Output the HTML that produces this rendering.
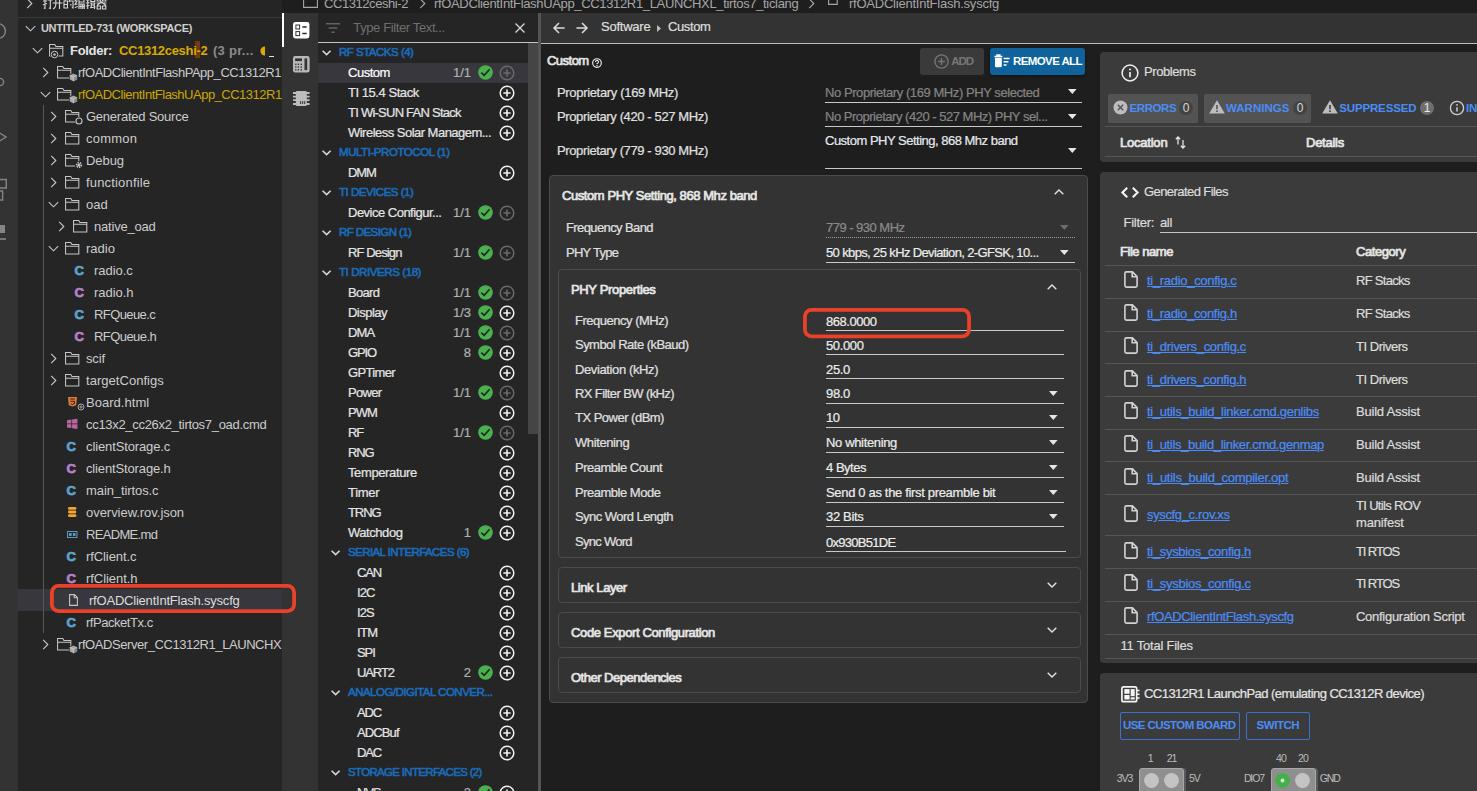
<!DOCTYPE html><html><head><meta charset="utf-8"><title>SysConfig</title><style>
*{box-sizing:border-box;margin:0;padding:0}
html,body{width:1477px;height:791px;overflow:hidden;background:#1e1e1e}
body{font-family:"Liberation Sans",sans-serif;font-size:13px;color:#ccc;position:relative}
.a{position:absolute}
.t{position:absolute;white-space:pre;line-height:16px;height:16px}
.b{font-weight:700}
svg{position:absolute;overflow:visible}
.sb{font-size:13px;letter-spacing:-0.2px;color:#ccc}
.r{font-size:13px;letter-spacing:-0.36px;color:#e0e0e0;-webkit-text-stroke:0.22px}
.rb{font-size:13px;font-weight:400;letter-spacing:-0.3px;color:#e6e6e6;-webkit-text-stroke:0.7px #e6e6e6}
.hd{font-size:11.5px;font-weight:400;letter-spacing:-0.5px;color:#1a6cba;-webkit-text-stroke:0.6px #1a6cba}
.card{position:absolute;background:#333;border:1px solid #4b4b4b;border-radius:4px}
.rc{position:absolute;background:#3b3b3b;border-radius:4px}
.lk{text-decoration:underline}
</style></head><body>
<div class="a" style="left:0px;top:0px;width:1477px;height:13px;background:#1e1e1e;"></div>
<div class="a" style="left:0px;top:0px;width:18px;height:791px;background:#333333;"></div>
<div class="a" style="left:18px;top:0px;width:264px;height:791px;background:#252526;"></div>
<div class="a" style="left:18px;top:17px;width:264px;height:1px;background:#3a3a3a;"></div>
<svg style="left:26px;top:-2.5px" width="7" height="11" viewBox="0 0 7 11"><path d="M1.2 0.8 L5.8 5.5 L1.2 10.2" fill="none" stroke="#c5c5c5" stroke-width="1.15"/></svg>
<svg style="left:41.5px;top:-3.5px" width="11" height="13" viewBox="0 0 11 13"><path d="M1 4 H5 M3 1 V11.5 L1.8 11 M0.8 8 L5 6.5 M5.5 3 H10.5 M8.3 3 V11.5 L6.8 11" stroke="#d4d4d4" stroke-width="1.15" fill="none"/></svg>
<svg style="left:52.3px;top:-3.5px" width="11" height="13" viewBox="0 0 11 13"><path d="M1.5 2.5 H9.5 M0.5 6 H10.5 M3.8 2.5 V8 Q3.5 11 1 12 M7.5 2.5 V12" stroke="#d4d4d4" stroke-width="1.15" fill="none"/></svg>
<svg style="left:63.1px;top:-3.5px" width="11" height="13" viewBox="0 0 11 13"><path d="M1 4 H4.5 V11 H1 Z M1 7.5 H4.5 M2.5 1.5 L2 4 M7 1.5 L6 5 M6.5 4 H10 V11 L8.8 10.5 M7.5 7 L8.3 8.5" stroke="#d4d4d4" stroke-width="1.15" fill="none"/></svg>
<svg style="left:73.9px;top:-3.5px" width="11" height="13" viewBox="0 0 11 13"><path d="M2.5 1 L1 4 L3 4 L1 7.5 L3.5 7 M0.8 10.5 L3.8 9.5 M5 2.5 H10 V5 H5 Z M5 5 V12 M5 7 H10.3 V12 M5 9.5 H10 M7 7 V12 M8.7 7 V12" stroke="#d4d4d4" stroke-width="1.15" fill="none"/></svg>
<svg style="left:84.7px;top:-3.5px" width="11" height="13" viewBox="0 0 11 13"><path d="M0.8 3 H4.5 M2.7 1 V12 M0.8 6 L4.5 5.6 M0.8 9 L4.6 8.5 M5.8 1.5 H9.8 V4.5 H5.8 Z M5.2 6 H10.5 M6.3 6 V11 M9.4 6 V12 M6.3 8 H9.4 M5 10.8 L10.5 10" stroke="#d4d4d4" stroke-width="1.15" fill="none"/></svg>
<svg style="left:95.5px;top:-3.5px" width="11" height="13" viewBox="0 0 11 13"><path d="M1.2 1.2 H4.5 V4 H1.2 Z M6.5 1.2 H9.8 V4 H6.5 Z M0.5 6 H10.5 M5.5 4.5 L1 8.5 M5.5 5 L10 8.5 M1.2 9 H4.5 V12 H1.2 Z M6.5 9 H9.8 V12 H6.5 Z" stroke="#d4d4d4" stroke-width="1.15" fill="none"/></svg>
<svg style="left:24.5px;top:25.0px" width="11" height="7" viewBox="0 0 11 7"><path d="M0.8 1.2 L5.5 5.8 L10.2 1.2" fill="none" stroke="#c5c5c5" stroke-width="1.15"/></svg>
<div class="t b" style="left:41px;top:20px;font-size:11px;color:#cfcfcf;letter-spacing:-0.32px">UNTITLED-731 (WORKSPACE)</div>
<svg style="left:31.5px;top:47.0px" width="11" height="7" viewBox="0 0 11 7"><path d="M0.8 1.2 L5.5 5.8 L10.2 1.2" fill="none" stroke="#c5c5c5" stroke-width="1.15"/></svg>
<svg style="left:49px;top:44.0px" width="14.4" height="12.6" viewBox="0 0 15 13" preserveAspectRatio="none"><path d="M0.6 0.6 H6 L7.2 2.6 H14.4 V12.4 H0.6 Z M0.6 4.4 H14.4" fill="none" stroke="#c5c5c5" stroke-width="1.1"/></svg>
<svg style="left:49.6px;top:50.3px" width="9" height="9" viewBox="0 0 9 9"><circle cx="4.5" cy="4.5" r="4.5" fill="#252526"/><circle cx="4.5" cy="4.5" r="3.3" fill="none" stroke="#c5c5c5" stroke-width="1"/><circle cx="4.5" cy="4.5" r="1.2" fill="#c5c5c5"/></svg>
<div class="t b" style="left:70px;top:43px;font-size:13px;letter-spacing:-0.3px;color:#e4e4e4">Folder:</div>
<div class="a" style="left:195px;top:41px;width:5px;height:17px;background:#74390f;"></div>
<div class="t b" style="left:119px;top:43px;font-size:13px;color:#d9ab00;letter-spacing:-0.32px">CC1312ceshi-2</div>
<div class="t b" style="left:213px;top:43px;font-size:13px;color:#8c8c8c;letter-spacing:0.28px">(3 pr...</div>
<svg style="left:259px;top:46px" width="6" height="10" viewBox="0 0 6 10"><path d="M6 0.4 A4.6 4.6 0 0 0 6 9.6 Z" fill="#d9ab00"/></svg>
<div class="a" style="left:269px;top:56px;width:5px;height:1px;background:#e0e0e0;"></div>
<div class="a" style="left:18px;top:589px;width:264px;height:22px;background:#37373d;"></div>
<div class="a" style="left:43px;top:105px;width:1px;height:528px;background:#585858;"></div>
<svg style="left:42px;top:67.0px" width="7" height="11" viewBox="0 0 7 11"><path d="M1.2 0.8 L5.8 5.5 L1.2 10.2" fill="none" stroke="#c5c5c5" stroke-width="1.15"/></svg>
<svg style="left:57px;top:66.0px" width="14.4" height="12.6" viewBox="0 0 15 13" preserveAspectRatio="none"><path d="M0.6 0.6 H6 L7.2 2.6 H14.4 V12.4 H0.6 Z M0.6 4.4 H14.4" fill="none" stroke="#c5c5c5" stroke-width="1.1"/></svg>
<svg style="left:68.6px;top:72.9px" width="8.8" height="8.8" viewBox="0 0 8.8 8.8"><circle cx="4.4" cy="4.4" r="4.4" fill="#252526"/><path d="M4.4 0.5 L8.1 2.3 V6.4 L4.4 8.3 L0.7 6.4 V2.3 Z" fill="#a6a6a6"/><path d="M4.4 4.2 L8.1 2.3 V6.4 L4.4 8.3 Z" fill="#8a8a8a"/><path d="M0.7 2.3 L4.4 4.2 L8.1 2.3 M4.4 4.2 V8.3" stroke="#e8e8e8" stroke-width="0.55" fill="none"/></svg>
<div class="t sb" style="left:78px;top:65px;color:#ccc;letter-spacing:-0.47px">rfOADClientIntFlashPApp_CC1312R1</div>
<svg style="left:39.5px;top:91.0px" width="11" height="7" viewBox="0 0 11 7"><path d="M0.8 1.2 L5.5 5.8 L10.2 1.2" fill="none" stroke="#c5c5c5" stroke-width="1.15"/></svg>
<svg style="left:57px;top:88.0px" width="14.4" height="12.6" viewBox="0 0 15 13" preserveAspectRatio="none"><path d="M0.6 0.6 H6 L7.2 2.6 H14.4 V12.4 H0.6 Z M0.6 4.4 H14.4" fill="none" stroke="#c5c5c5" stroke-width="1.1"/></svg>
<svg style="left:68.6px;top:94.9px" width="8.8" height="8.8" viewBox="0 0 8.8 8.8"><circle cx="4.4" cy="4.4" r="4.4" fill="#252526"/><path d="M4.4 0.5 L8.1 2.3 V6.4 L4.4 8.3 L0.7 6.4 V2.3 Z" fill="#a6a6a6"/><path d="M4.4 4.2 L8.1 2.3 V6.4 L4.4 8.3 Z" fill="#8a8a8a"/><path d="M0.7 2.3 L4.4 4.2 L8.1 2.3 M4.4 4.2 V8.3" stroke="#e8e8e8" stroke-width="0.55" fill="none"/></svg>
<div class="t sb" style="left:78px;top:87px;color:#cca700;letter-spacing:-0.50px">rfOADClientIntFlashUApp_CC1312R1</div>
<svg style="left:50px;top:111.0px" width="7" height="11" viewBox="0 0 7 11"><path d="M1.2 0.8 L5.8 5.5 L1.2 10.2" fill="none" stroke="#c5c5c5" stroke-width="1.15"/></svg>
<svg style="left:65px;top:110.0px" width="14.4" height="12.6" viewBox="0 0 15 13" preserveAspectRatio="none"><path d="M0.6 0.6 H6 L7.2 2.6 H14.4 V12.4 H0.6 Z M0.6 4.4 H14.4" fill="none" stroke="#c5c5c5" stroke-width="1.1"/></svg>
<svg style="left:75px;top:117.0px" width="8" height="8" viewBox="0 0 8 8"><circle cx="4" cy="4" r="4" fill="#252526"/><circle cx="4" cy="4" r="3" fill="none" stroke="#c5c5c5" stroke-width="1.1"/></svg>
<div class="t sb" style="left:86px;top:109px;color:#ccc;letter-spacing:-0.24px">Generated Source</div>
<svg style="left:50px;top:133.0px" width="7" height="11" viewBox="0 0 7 11"><path d="M1.2 0.8 L5.8 5.5 L1.2 10.2" fill="none" stroke="#c5c5c5" stroke-width="1.15"/></svg>
<svg style="left:65px;top:132.0px" width="14.4" height="12.6" viewBox="0 0 15 13" preserveAspectRatio="none"><path d="M0.6 0.6 H6 L7.2 2.6 H14.4 V12.4 H0.6 Z M0.6 4.4 H14.4" fill="none" stroke="#c5c5c5" stroke-width="1.1"/></svg>
<div class="t sb" style="left:86px;top:131px;color:#ccc;letter-spacing:0.22px">common</div>
<svg style="left:50px;top:155.0px" width="7" height="11" viewBox="0 0 7 11"><path d="M1.2 0.8 L5.8 5.5 L1.2 10.2" fill="none" stroke="#c5c5c5" stroke-width="1.15"/></svg>
<svg style="left:65px;top:154.0px" width="14.4" height="12.6" viewBox="0 0 15 13" preserveAspectRatio="none"><path d="M0.6 0.6 H6 L7.2 2.6 H14.4 V12.4 H0.6 Z M0.6 4.4 H14.4" fill="none" stroke="#c5c5c5" stroke-width="1.1"/></svg>
<svg style="left:75px;top:161.0px" width="8" height="8" viewBox="0 0 8 8"><circle cx="4" cy="4" r="4" fill="#252526"/><circle cx="4" cy="4" r="2.4" fill="none" stroke="#c5c5c5" stroke-width="1.6" stroke-dasharray="1.3 0.9"/><circle cx="4" cy="4" r="1.6" fill="#c5c5c5"/></svg>
<div class="t sb" style="left:86px;top:153px;color:#ccc;letter-spacing:-0.06px">Debug</div>
<svg style="left:50px;top:177.0px" width="7" height="11" viewBox="0 0 7 11"><path d="M1.2 0.8 L5.8 5.5 L1.2 10.2" fill="none" stroke="#c5c5c5" stroke-width="1.15"/></svg>
<svg style="left:65px;top:176.0px" width="14.4" height="12.6" viewBox="0 0 15 13" preserveAspectRatio="none"><path d="M0.6 0.6 H6 L7.2 2.6 H14.4 V12.4 H0.6 Z M0.6 4.4 H14.4" fill="none" stroke="#c5c5c5" stroke-width="1.1"/></svg>
<div class="t sb" style="left:86px;top:175px;color:#ccc;letter-spacing:0.17px">functionfile</div>
<svg style="left:47.5px;top:201.0px" width="11" height="7" viewBox="0 0 11 7"><path d="M0.8 1.2 L5.5 5.8 L10.2 1.2" fill="none" stroke="#c5c5c5" stroke-width="1.15"/></svg>
<svg style="left:65px;top:198.0px" width="14.4" height="12.6" viewBox="0 0 15 13" preserveAspectRatio="none"><path d="M0.6 0.6 H6 L7.2 2.6 H14.4 V12.4 H0.6 Z M0.6 4.4 H14.4" fill="none" stroke="#c5c5c5" stroke-width="1.1"/></svg>
<div class="t sb" style="left:86px;top:197px;color:#ccc;letter-spacing:-0.03px">oad</div>
<svg style="left:58px;top:221.0px" width="7" height="11" viewBox="0 0 7 11"><path d="M1.2 0.8 L5.8 5.5 L1.2 10.2" fill="none" stroke="#c5c5c5" stroke-width="1.15"/></svg>
<svg style="left:73px;top:220.0px" width="14.4" height="12.6" viewBox="0 0 15 13" preserveAspectRatio="none"><path d="M0.6 0.6 H6 L7.2 2.6 H14.4 V12.4 H0.6 Z M0.6 4.4 H14.4" fill="none" stroke="#c5c5c5" stroke-width="1.1"/></svg>
<div class="t sb" style="left:94px;top:219px;color:#ccc;letter-spacing:-0.20px">native_oad</div>
<svg style="left:47.5px;top:245.0px" width="11" height="7" viewBox="0 0 11 7"><path d="M0.8 1.2 L5.5 5.8 L10.2 1.2" fill="none" stroke="#c5c5c5" stroke-width="1.15"/></svg>
<svg style="left:65px;top:242.0px" width="14.4" height="12.6" viewBox="0 0 15 13" preserveAspectRatio="none"><path d="M0.6 0.6 H6 L7.2 2.6 H14.4 V12.4 H0.6 Z M0.6 4.4 H14.4" fill="none" stroke="#c5c5c5" stroke-width="1.1"/></svg>
<div class="t sb" style="left:86px;top:241px;color:#ccc;letter-spacing:0.02px">radio</div>
<div class="t b" style="left:74.5px;top:262.5px;font-size:13px;color:#5aa3cc;-webkit-text-stroke:0.75px #5aa3cc">C</div>
<div class="t sb" style="left:94px;top:263px;color:#ccc;letter-spacing:-0.05px">radio.c</div>
<div class="t b" style="left:74.5px;top:284.5px;font-size:13px;color:#b57fc8;-webkit-text-stroke:0.75px #b57fc8">C</div>
<div class="t sb" style="left:94px;top:285px;color:#ccc;letter-spacing:-0.04px">radio.h</div>
<div class="t b" style="left:74.5px;top:306.5px;font-size:13px;color:#5aa3cc;-webkit-text-stroke:0.75px #5aa3cc">C</div>
<div class="t sb" style="left:94px;top:307px;color:#ccc;letter-spacing:-0.59px">RFQueue.c</div>
<div class="t b" style="left:74.5px;top:328.5px;font-size:13px;color:#b57fc8;-webkit-text-stroke:0.75px #b57fc8">C</div>
<div class="t sb" style="left:94px;top:329px;color:#ccc;letter-spacing:-0.56px">RFQueue.h</div>
<svg style="left:50px;top:353.0px" width="7" height="11" viewBox="0 0 7 11"><path d="M1.2 0.8 L5.8 5.5 L1.2 10.2" fill="none" stroke="#c5c5c5" stroke-width="1.15"/></svg>
<svg style="left:65px;top:352.0px" width="14.4" height="12.6" viewBox="0 0 15 13" preserveAspectRatio="none"><path d="M0.6 0.6 H6 L7.2 2.6 H14.4 V12.4 H0.6 Z M0.6 4.4 H14.4" fill="none" stroke="#c5c5c5" stroke-width="1.1"/></svg>
<div class="t sb" style="left:86px;top:351px;color:#ccc;letter-spacing:-0.15px">scif</div>
<svg style="left:50px;top:375.0px" width="7" height="11" viewBox="0 0 7 11"><path d="M1.2 0.8 L5.8 5.5 L1.2 10.2" fill="none" stroke="#c5c5c5" stroke-width="1.15"/></svg>
<svg style="left:65px;top:374.0px" width="14.4" height="12.6" viewBox="0 0 15 13" preserveAspectRatio="none"><path d="M0.6 0.6 H6 L7.2 2.6 H14.4 V12.4 H0.6 Z M0.6 4.4 H14.4" fill="none" stroke="#c5c5c5" stroke-width="1.1"/></svg>
<div class="t sb" style="left:86px;top:373px;color:#ccc;letter-spacing:0.04px">targetConfigs</div>
<svg style="left:68px;top:397px" width="9" height="10" viewBox="0 0 9 10"><path d="M0 0 H9 L8.2 8.2 L4.5 9.6 L0.8 8.2 Z" fill="#e37933"/><path d="M2.2 2 H6.8 M2.4 4.3 H6.6 L6.3 6.8 L4.5 7.4 L2.7 6.8" stroke="#252526" stroke-width="1" fill="none"/></svg>
<svg style="left:76.5px;top:403px" width="8" height="8" viewBox="0 0 8 8"><circle cx="4" cy="4" r="4" fill="#252526"/><circle cx="4" cy="4" r="3" fill="none" stroke="#aaa" stroke-width="1"/><path d="M2.3 4 H5.7 M4 2.3 V5.7" stroke="#aaa" stroke-width="0.9"/></svg>
<div class="t sb" style="left:86px;top:395px;color:#ccc;letter-spacing:0.03px">Board.html</div>
<svg style="left:67px;top:419px" width="10.4" height="9.6" viewBox="0 0 11 10"><path d="M0 1.2 L4.6 0.5 V4.6 H0 Z M5.4 0.4 L11 -0.4 V4.6 H5.4 Z M0 5.4 H4.6 V9.5 L0 8.8 Z M5.4 5.4 H11 V10.4 L5.4 9.6 Z" fill="#bb659f"/></svg>
<div class="t sb" style="left:86px;top:417px;color:#ccc;letter-spacing:-0.31px">cc13x2_cc26x2_tirtos7_oad.cmd</div>
<div class="t b" style="left:66.5px;top:438.5px;font-size:13px;color:#5aa3cc;-webkit-text-stroke:0.75px #5aa3cc">C</div>
<div class="t sb" style="left:86px;top:439px;color:#ccc;letter-spacing:-0.12px">clientStorage.c</div>
<div class="t b" style="left:66.5px;top:460.5px;font-size:13px;color:#b57fc8;-webkit-text-stroke:0.75px #b57fc8">C</div>
<div class="t sb" style="left:86px;top:461px;color:#ccc;letter-spacing:-0.14px">clientStorage.h</div>
<div class="t b" style="left:66.5px;top:482.5px;font-size:13px;color:#5aa3cc;-webkit-text-stroke:0.75px #5aa3cc">C</div>
<div class="t sb" style="left:86px;top:483px;color:#ccc;letter-spacing:-0.09px">main_tirtos.c</div>
<svg style="left:68px;top:507px" width="8.4" height="10" viewBox="0 0 8.4 10"><rect x="0" y="0" width="8.4" height="2.8" rx="1.3" fill="#f0a32f"/><rect x="0" y="3.6" width="8.4" height="2.8" rx="1.3" fill="#f0a32f"/><rect x="0" y="7.2" width="8.4" height="2.8" rx="1.3" fill="#f0a32f"/></svg>
<div class="t sb" style="left:86px;top:505px;color:#ccc;letter-spacing:-0.04px">overview.rov.json</div>
<svg style="left:67px;top:530.5px" width="10.5" height="7" viewBox="0 0 10.5 7"><rect x="0.5" y="0.5" width="9.5" height="6" fill="none" stroke="#5b9bbf" stroke-width="1"/><rect x="2" y="2" width="2.6" height="3" fill="#5b9bbf"/><rect x="5.9" y="2" width="2.6" height="3" fill="#5b9bbf"/></svg>
<div class="t sb" style="left:86px;top:527px;color:#ccc;letter-spacing:-0.67px">README.md</div>
<div class="t b" style="left:66.5px;top:548.5px;font-size:13px;color:#5aa3cc;-webkit-text-stroke:0.75px #5aa3cc">C</div>
<div class="t sb" style="left:86px;top:549px;color:#ccc;letter-spacing:-0.09px">rfClient.c</div>
<div class="t b" style="left:66.5px;top:570.5px;font-size:13px;color:#b57fc8;-webkit-text-stroke:0.75px #b57fc8">C</div>
<div class="t sb" style="left:86px;top:571px;color:#ccc;letter-spacing:-0.05px">rfClient.h</div>
<svg style="left:69px;top:593.5px" width="9" height="12" viewBox="0 0 9 12"><path d="M0.6 0.6 H5.4 L8.4 3.6 V11.4 H0.6 Z M5.2 0.8 V3.8 H8.2" fill="none" stroke="#c5c5c5" stroke-width="1.1"/></svg>
<div class="t sb" style="left:89px;top:593px;color:#ddd;letter-spacing:-0.21px">rfOADClientIntFlash.syscfg</div>
<div class="t b" style="left:66.5px;top:614.5px;font-size:13px;color:#5aa3cc;-webkit-text-stroke:0.75px #5aa3cc">C</div>
<div class="t sb" style="left:86px;top:615px;color:#ccc;letter-spacing:-0.46px">rfPacketTx.c</div>
<svg style="left:42px;top:639.0px" width="7" height="11" viewBox="0 0 7 11"><path d="M1.2 0.8 L5.8 5.5 L1.2 10.2" fill="none" stroke="#c5c5c5" stroke-width="1.15"/></svg>
<svg style="left:57px;top:638.0px" width="14.4" height="12.6" viewBox="0 0 15 13" preserveAspectRatio="none"><path d="M0.6 0.6 H6 L7.2 2.6 H14.4 V12.4 H0.6 Z M0.6 4.4 H14.4" fill="none" stroke="#c5c5c5" stroke-width="1.1"/></svg>
<svg style="left:68.6px;top:644.9px" width="8.8" height="8.8" viewBox="0 0 8.8 8.8"><circle cx="4.4" cy="4.4" r="4.4" fill="#252526"/><path d="M4.4 0.5 L8.1 2.3 V6.4 L4.4 8.3 L0.7 6.4 V2.3 Z" fill="#a6a6a6"/><path d="M4.4 4.2 L8.1 2.3 V6.4 L4.4 8.3 Z" fill="#8a8a8a"/><path d="M0.7 2.3 L4.4 4.2 L8.1 2.3 M4.4 4.2 V8.3" stroke="#e8e8e8" stroke-width="0.55" fill="none"/></svg>
<div class="t sb" style="left:78px;top:637px;color:#ccc;letter-spacing:-0.43px">rfOADServer_CC1312R1_LAUNCHXL</div>
<svg style="left:50px;top:584px;z-index:50" width="246" height="29" viewBox="0 0 246 29"><rect x="1.9" y="1.9" width="242.2" height="25.2" rx="6.5" fill="none" stroke="#e9412a" stroke-width="3.8"/></svg>
<svg style="left:0px;top:22px" width="8" height="18" viewBox="0 0 8 18"><circle cx="-2" cy="9" r="7.4" fill="none" stroke="#858585" stroke-width="1.4"/></svg>
<svg style="left:0px;top:76px" width="6" height="12" viewBox="0 0 6 12"><circle cx="0" cy="6" r="3.6" fill="none" stroke="#858585" stroke-width="1.4"/></svg>
<svg style="left:0px;top:129px" width="8" height="16" viewBox="0 0 8 16"><path d="M-6 0.5 L6 8 L-6 15.5" fill="none" stroke="#858585" stroke-width="1.4"/></svg>
<svg style="left:0px;top:178px" width="8" height="24" viewBox="0 0 8 24"><path d="M-2 1.5 H6.3 V10 H-2" fill="none" stroke="#858585" stroke-width="1.4"/><path d="M-2 13 H2.6 V22 H-2" fill="none" stroke="#858585" stroke-width="1.4"/></svg>
<svg style="left:0px;top:224px" width="8" height="18" viewBox="0 0 8 18"><path d="M0 1 H5 V9 H0 Z" fill="#858585"/><path d="M0 15 H6" stroke="#858585" stroke-width="1.6"/></svg>
<div class="a" style="left:282px;top:13px;width:36px;height:778px;background:#333333;"></div>
<div class="a" style="left:282px;top:0px;width:1195px;height:13px;background:#1e1e1e;"></div>
<div class="a" style="left:282px;top:13px;width:2px;height:34px;background:#ffffff;"></div>
<svg style="left:302.5px;top:-6px" width="15" height="14" viewBox="0 0 15 14"><path d="M0.6 0.6 H14.4 V13.4 H0.6 Z" fill="none" stroke="#a6a6a6" stroke-width="1.1"/></svg>
<div class="t " style="left:324px;top:-4.5px;color:#a6a6a6;letter-spacing:-0.43px">CC1312ceshi-2</div>
<svg style="left:419px;top:-2.5px" width="7" height="11" viewBox="0 0 7 11"><path d="M1.2 0.8 L5.8 5.5 L1.2 10.2" fill="none" stroke="#a6a6a6" stroke-width="1.15"/></svg>
<div class="t " style="left:434px;top:-4.5px;color:#a6a6a6;letter-spacing:-0.34px">rfOADClientIntFlashUApp_CC1312R1_LAUNCHXL_tirtos7_ticlang</div>
<svg style="left:808px;top:-2.5px" width="7" height="11" viewBox="0 0 7 11"><path d="M1.2 0.8 L5.8 5.5 L1.2 10.2" fill="none" stroke="#a6a6a6" stroke-width="1.15"/></svg>
<svg style="left:828px;top:-6px" width="10" height="11" viewBox="0 0 10 11"><path d="M0.6 0 V10.4 H9.2 V0" fill="none" stroke="#a6a6a6" stroke-width="1.1"/></svg>
<div class="t " style="left:849px;top:-4.5px;color:#a6a6a6;letter-spacing:-0.23px">rfOADClientIntFlash.syscfg</div>
<svg style="left:292.7px;top:21.6px" width="16.4" height="16.4" viewBox="0 0 16.4 16.4"><rect x="0" y="0" width="16.4" height="16.4" rx="2.3" fill="#fff"/><rect x="2.9" y="3" width="3.7" height="4" fill="none" stroke="#333" stroke-width="1"/><rect x="2.9" y="9.6" width="3.7" height="4" fill="none" stroke="#333" stroke-width="1"/><path d="M9.3 5.1 H13.7 M9.3 11.5 H13.7" stroke="#2c2c2c" stroke-width="1.5"/></svg>
<svg style="left:292.7px;top:55.7px" width="16.6" height="16.4" viewBox="0 0 16.6 16.4"><rect x="0" y="0" width="16.6" height="16.4" rx="2.2" fill="#b9b9b9"/><rect x="2.1" y="2.4" width="6.9" height="2.7" fill="#333"/><rect x="11.5" y="2.4" width="2.7" height="11.7" fill="#333"/><rect x="2.1" y="7.6" width="1.35" height="1.35" fill="#333"/><rect x="2.1" y="10.35" width="1.35" height="1.35" fill="#333"/><rect x="2.1" y="13.15" width="1.35" height="1.35" fill="#333"/><rect x="4.65" y="7.6" width="1.4" height="1.35" fill="#333"/><rect x="4.65" y="10.35" width="1.4" height="1.35" fill="#333"/><rect x="4.65" y="13.15" width="1.4" height="1.35" fill="#333"/><rect x="7.45" y="7.6" width="1.55" height="1.35" fill="#333"/><rect x="7.45" y="10.35" width="1.55" height="1.35" fill="#333"/><rect x="7.45" y="13.15" width="1.55" height="1.35" fill="#333"/></svg>
<svg style="left:292.7px;top:90.5px" width="16.6" height="15.1" viewBox="0 0 16.6 15.1"><rect x="2.85" y="0" width="10.95" height="15.1" rx="1.3" fill="#bcbcbc"/><path d="M0 2 H16.6 M0 5.7 H16.6 M0 9.2 H16.6 M0 13 H16.6" stroke="#bcbcbc" stroke-width="1.8"/><path d="M7.6 10.1 V13 M9.7 10.1 V13 M11.7 10.1 V13" stroke="#2a2a2a" stroke-width="0.95"/></svg>
<div class="a" style="left:318px;top:13px;width:220px;height:778px;background:#252526;"></div>
<div class="a" style="left:318px;top:42px;width:220px;height:1px;background:#c4c4c4;"></div>
<svg style="left:326px;top:23px" width="14" height="10" viewBox="0 0 14 10"><path d="M0 0.8 H14 M2.6 5 H11.4 M5.4 9.2 H8.6" stroke="#626262" stroke-width="1.4"/></svg>
<div class="t " style="left:353.3px;top:20px;font-size:13px;color:#6e6e6e;letter-spacing:-0.38px">Type Filter Text...</div>
<svg style="left:515px;top:23px" width="10" height="10" viewBox="0 0 10 10"><path d="M0.5 0.5 L9.5 9.5 M9.5 0.5 L0.5 9.5" stroke="#d8d8d8" stroke-width="1.3"/></svg>
<div class="a" style="left:528px;top:43px;width:10px;height:391px;background:#454545;"></div>
<div class="a" style="left:538px;top:13px;width:3px;height:778px;background:#555555;"></div>
<div class="a" style="left:318px;top:63px;width:210px;height:20px;background:#37373d;"></div>
<svg style="left:322.4px;top:49.6px" width="9.2" height="5.6" viewBox="0 0 9.2 5.6"><path d="M0.6 0.8 L4.6 4.7 L8.6 0.8" fill="none" stroke="#d8d8d8" stroke-width="1.6"/></svg>
<div class="t hd" style="left:339px;top:44px;;letter-spacing:-0.50px">RF STACKS (4)</div>
<div class="t r" style="left:348px;top:65px;color:#e4e4e4;color:#fff;letter-spacing:-0.47px">Custom</div>
<div class="t r" style="right:1006px;top:64.8px;color:#b0b0b0;letter-spacing:0">1/1</div>
<svg style="left:478.1px;top:65.1px" width="15" height="15" viewBox="0 0 15 15"><circle cx="7.5" cy="7.5" r="7.3" fill="#4bb150"/><path d="M3.3 7.7 L6.2 10.4 L11.6 4.3" fill="none" stroke="#1e2a1e" stroke-width="1.7"/></svg>
<svg style="left:499px;top:65px" width="16" height="16" viewBox="0 0 16 16"><circle cx="8" cy="8" r="6.8" fill="none" stroke="#6a6a6a" stroke-width="1.5"/><path d="M4.4 8 H11.6 M8 4.4 V11.6" stroke="#6a6a6a" stroke-width="1.6"/></svg>
<div class="t r" style="left:348px;top:85px;color:#e4e4e4;letter-spacing:-0.45px">TI 15.4 Stack</div>
<svg style="left:499px;top:85px" width="16" height="16" viewBox="0 0 16 16"><circle cx="8" cy="8" r="6.8" fill="none" stroke="#f2f2f2" stroke-width="1.5"/><path d="M4.4 8 H11.6 M8 4.4 V11.6" stroke="#f2f2f2" stroke-width="1.6"/></svg>
<div class="t r" style="left:348px;top:105px;color:#e4e4e4;letter-spacing:-0.76px">TI Wi-SUN FAN Stack</div>
<svg style="left:499px;top:105px" width="16" height="16" viewBox="0 0 16 16"><circle cx="8" cy="8" r="6.8" fill="none" stroke="#f2f2f2" stroke-width="1.5"/><path d="M4.4 8 H11.6 M8 4.4 V11.6" stroke="#f2f2f2" stroke-width="1.6"/></svg>
<div class="t r" style="left:348px;top:125px;color:#e4e4e4;letter-spacing:-0.52px">Wireless Solar Managem...</div>
<svg style="left:499px;top:125px" width="16" height="16" viewBox="0 0 16 16"><circle cx="8" cy="8" r="6.8" fill="none" stroke="#f2f2f2" stroke-width="1.5"/><path d="M4.4 8 H11.6 M8 4.4 V11.6" stroke="#f2f2f2" stroke-width="1.6"/></svg>
<svg style="left:322.4px;top:149.6px" width="9.2" height="5.6" viewBox="0 0 9.2 5.6"><path d="M0.6 0.8 L4.6 4.7 L8.6 0.8" fill="none" stroke="#d8d8d8" stroke-width="1.6"/></svg>
<div class="t hd" style="left:339px;top:144px;;letter-spacing:-0.44px">MULTI-PROTOCOL (1)</div>
<div class="t r" style="left:348px;top:165px;color:#e4e4e4;letter-spacing:-1.08px">DMM</div>
<svg style="left:499px;top:165px" width="16" height="16" viewBox="0 0 16 16"><circle cx="8" cy="8" r="6.8" fill="none" stroke="#f2f2f2" stroke-width="1.5"/><path d="M4.4 8 H11.6 M8 4.4 V11.6" stroke="#f2f2f2" stroke-width="1.6"/></svg>
<svg style="left:322.4px;top:189.6px" width="9.2" height="5.6" viewBox="0 0 9.2 5.6"><path d="M0.6 0.8 L4.6 4.7 L8.6 0.8" fill="none" stroke="#d8d8d8" stroke-width="1.6"/></svg>
<div class="t hd" style="left:339px;top:184px;;letter-spacing:-0.49px">TI DEVICES (1)</div>
<div class="t r" style="left:348px;top:205px;color:#e4e4e4;letter-spacing:-0.51px">Device Configur...</div>
<div class="t r" style="right:1006px;top:204.8px;color:#b0b0b0;letter-spacing:0">1/1</div>
<svg style="left:478.1px;top:205.1px" width="15" height="15" viewBox="0 0 15 15"><circle cx="7.5" cy="7.5" r="7.3" fill="#4bb150"/><path d="M3.3 7.7 L6.2 10.4 L11.6 4.3" fill="none" stroke="#1e2a1e" stroke-width="1.7"/></svg>
<svg style="left:499px;top:205px" width="16" height="16" viewBox="0 0 16 16"><circle cx="8" cy="8" r="6.8" fill="none" stroke="#6a6a6a" stroke-width="1.5"/><path d="M4.4 8 H11.6 M8 4.4 V11.6" stroke="#6a6a6a" stroke-width="1.6"/></svg>
<svg style="left:322.4px;top:229.6px" width="9.2" height="5.6" viewBox="0 0 9.2 5.6"><path d="M0.6 0.8 L4.6 4.7 L8.6 0.8" fill="none" stroke="#d8d8d8" stroke-width="1.6"/></svg>
<div class="t hd" style="left:339px;top:224px;;letter-spacing:-0.58px">RF DESIGN (1)</div>
<div class="t r" style="left:348px;top:245px;color:#e4e4e4;letter-spacing:-0.87px">RF Design</div>
<div class="t r" style="right:1006px;top:244.8px;color:#b0b0b0;letter-spacing:0">1/1</div>
<svg style="left:478.1px;top:245.1px" width="15" height="15" viewBox="0 0 15 15"><circle cx="7.5" cy="7.5" r="7.3" fill="#4bb150"/><path d="M3.3 7.7 L6.2 10.4 L11.6 4.3" fill="none" stroke="#1e2a1e" stroke-width="1.7"/></svg>
<svg style="left:499px;top:245px" width="16" height="16" viewBox="0 0 16 16"><circle cx="8" cy="8" r="6.8" fill="none" stroke="#6a6a6a" stroke-width="1.5"/><path d="M4.4 8 H11.6 M8 4.4 V11.6" stroke="#6a6a6a" stroke-width="1.6"/></svg>
<svg style="left:322.4px;top:269.6px" width="9.2" height="5.6" viewBox="0 0 9.2 5.6"><path d="M0.6 0.8 L4.6 4.7 L8.6 0.8" fill="none" stroke="#d8d8d8" stroke-width="1.6"/></svg>
<div class="t hd" style="left:339px;top:264px;;letter-spacing:-0.41px">TI DRIVERS (18)</div>
<div class="t r" style="left:348px;top:285px;color:#e4e4e4;letter-spacing:-0.68px">Board</div>
<div class="t r" style="right:1006px;top:284.8px;color:#b0b0b0;letter-spacing:0">1/1</div>
<svg style="left:478.1px;top:285.1px" width="15" height="15" viewBox="0 0 15 15"><circle cx="7.5" cy="7.5" r="7.3" fill="#4bb150"/><path d="M3.3 7.7 L6.2 10.4 L11.6 4.3" fill="none" stroke="#1e2a1e" stroke-width="1.7"/></svg>
<svg style="left:499px;top:285px" width="16" height="16" viewBox="0 0 16 16"><circle cx="8" cy="8" r="6.8" fill="none" stroke="#6a6a6a" stroke-width="1.5"/><path d="M4.4 8 H11.6 M8 4.4 V11.6" stroke="#6a6a6a" stroke-width="1.6"/></svg>
<div class="t r" style="left:348px;top:305px;color:#e4e4e4;letter-spacing:-0.53px">Display</div>
<div class="t r" style="right:1006px;top:304.8px;color:#b0b0b0;letter-spacing:0">1/3</div>
<svg style="left:478.1px;top:305.1px" width="15" height="15" viewBox="0 0 15 15"><circle cx="7.5" cy="7.5" r="7.3" fill="#4bb150"/><path d="M3.3 7.7 L6.2 10.4 L11.6 4.3" fill="none" stroke="#1e2a1e" stroke-width="1.7"/></svg>
<svg style="left:499px;top:305px" width="16" height="16" viewBox="0 0 16 16"><circle cx="8" cy="8" r="6.8" fill="none" stroke="#f2f2f2" stroke-width="1.5"/><path d="M4.4 8 H11.6 M8 4.4 V11.6" stroke="#f2f2f2" stroke-width="1.6"/></svg>
<div class="t r" style="left:348px;top:325px;color:#e4e4e4;letter-spacing:-0.86px">DMA</div>
<div class="t r" style="right:1006px;top:324.8px;color:#b0b0b0;letter-spacing:0">1/1</div>
<svg style="left:478.1px;top:325.1px" width="15" height="15" viewBox="0 0 15 15"><circle cx="7.5" cy="7.5" r="7.3" fill="#4bb150"/><path d="M3.3 7.7 L6.2 10.4 L11.6 4.3" fill="none" stroke="#1e2a1e" stroke-width="1.7"/></svg>
<svg style="left:499px;top:325px" width="16" height="16" viewBox="0 0 16 16"><circle cx="8" cy="8" r="6.8" fill="none" stroke="#6a6a6a" stroke-width="1.5"/><path d="M4.4 8 H11.6 M8 4.4 V11.6" stroke="#6a6a6a" stroke-width="1.6"/></svg>
<div class="t r" style="left:348px;top:345px;color:#e4e4e4;letter-spacing:-1.10px">GPIO</div>
<div class="t r" style="right:1006px;top:344.8px;color:#b0b0b0;letter-spacing:0">8</div>
<svg style="left:478.1px;top:345.1px" width="15" height="15" viewBox="0 0 15 15"><circle cx="7.5" cy="7.5" r="7.3" fill="#4bb150"/><path d="M3.3 7.7 L6.2 10.4 L11.6 4.3" fill="none" stroke="#1e2a1e" stroke-width="1.7"/></svg>
<svg style="left:499px;top:345px" width="16" height="16" viewBox="0 0 16 16"><circle cx="8" cy="8" r="6.8" fill="none" stroke="#f2f2f2" stroke-width="1.5"/><path d="M4.4 8 H11.6 M8 4.4 V11.6" stroke="#f2f2f2" stroke-width="1.6"/></svg>
<div class="t r" style="left:348px;top:365px;color:#e4e4e4;letter-spacing:-0.65px">GPTimer</div>
<svg style="left:499px;top:365px" width="16" height="16" viewBox="0 0 16 16"><circle cx="8" cy="8" r="6.8" fill="none" stroke="#f2f2f2" stroke-width="1.5"/><path d="M4.4 8 H11.6 M8 4.4 V11.6" stroke="#f2f2f2" stroke-width="1.6"/></svg>
<div class="t r" style="left:348px;top:385px;color:#e4e4e4;letter-spacing:-0.69px">Power</div>
<div class="t r" style="right:1006px;top:384.8px;color:#b0b0b0;letter-spacing:0">1/1</div>
<svg style="left:478.1px;top:385.1px" width="15" height="15" viewBox="0 0 15 15"><circle cx="7.5" cy="7.5" r="7.3" fill="#4bb150"/><path d="M3.3 7.7 L6.2 10.4 L11.6 4.3" fill="none" stroke="#1e2a1e" stroke-width="1.7"/></svg>
<svg style="left:499px;top:385px" width="16" height="16" viewBox="0 0 16 16"><circle cx="8" cy="8" r="6.8" fill="none" stroke="#6a6a6a" stroke-width="1.5"/><path d="M4.4 8 H11.6 M8 4.4 V11.6" stroke="#6a6a6a" stroke-width="1.6"/></svg>
<div class="t r" style="left:348px;top:405px;color:#e4e4e4;letter-spacing:-1.03px">PWM</div>
<svg style="left:499px;top:405px" width="16" height="16" viewBox="0 0 16 16"><circle cx="8" cy="8" r="6.8" fill="none" stroke="#f2f2f2" stroke-width="1.5"/><path d="M4.4 8 H11.6 M8 4.4 V11.6" stroke="#f2f2f2" stroke-width="1.6"/></svg>
<div class="t r" style="left:348px;top:425px;color:#e4e4e4;letter-spacing:-1.10px">RF</div>
<div class="t r" style="right:1006px;top:424.8px;color:#b0b0b0;letter-spacing:0">1/1</div>
<svg style="left:478.1px;top:425.1px" width="15" height="15" viewBox="0 0 15 15"><circle cx="7.5" cy="7.5" r="7.3" fill="#4bb150"/><path d="M3.3 7.7 L6.2 10.4 L11.6 4.3" fill="none" stroke="#1e2a1e" stroke-width="1.7"/></svg>
<svg style="left:499px;top:425px" width="16" height="16" viewBox="0 0 16 16"><circle cx="8" cy="8" r="6.8" fill="none" stroke="#6a6a6a" stroke-width="1.5"/><path d="M4.4 8 H11.6 M8 4.4 V11.6" stroke="#6a6a6a" stroke-width="1.6"/></svg>
<div class="t r" style="left:348px;top:445px;color:#e4e4e4;letter-spacing:-1.10px">RNG</div>
<svg style="left:499px;top:445px" width="16" height="16" viewBox="0 0 16 16"><circle cx="8" cy="8" r="6.8" fill="none" stroke="#f2f2f2" stroke-width="1.5"/><path d="M4.4 8 H11.6 M8 4.4 V11.6" stroke="#f2f2f2" stroke-width="1.6"/></svg>
<div class="t r" style="left:348px;top:465px;color:#e4e4e4;letter-spacing:-0.38px">Temperature</div>
<svg style="left:499px;top:465px" width="16" height="16" viewBox="0 0 16 16"><circle cx="8" cy="8" r="6.8" fill="none" stroke="#f2f2f2" stroke-width="1.5"/><path d="M4.4 8 H11.6 M8 4.4 V11.6" stroke="#f2f2f2" stroke-width="1.6"/></svg>
<div class="t r" style="left:348px;top:485px;color:#e4e4e4;letter-spacing:-0.31px">Timer</div>
<svg style="left:499px;top:485px" width="16" height="16" viewBox="0 0 16 16"><circle cx="8" cy="8" r="6.8" fill="none" stroke="#f2f2f2" stroke-width="1.5"/><path d="M4.4 8 H11.6 M8 4.4 V11.6" stroke="#f2f2f2" stroke-width="1.6"/></svg>
<div class="t r" style="left:348px;top:505px;color:#e4e4e4;letter-spacing:-1.10px">TRNG</div>
<svg style="left:499px;top:505px" width="16" height="16" viewBox="0 0 16 16"><circle cx="8" cy="8" r="6.8" fill="none" stroke="#f2f2f2" stroke-width="1.5"/><path d="M4.4 8 H11.6 M8 4.4 V11.6" stroke="#f2f2f2" stroke-width="1.6"/></svg>
<div class="t r" style="left:348px;top:525px;color:#e4e4e4;letter-spacing:-0.45px">Watchdog</div>
<div class="t r" style="right:1006px;top:524.8px;color:#b0b0b0;letter-spacing:0">1</div>
<svg style="left:478.1px;top:525.1px" width="15" height="15" viewBox="0 0 15 15"><circle cx="7.5" cy="7.5" r="7.3" fill="#4bb150"/><path d="M3.3 7.7 L6.2 10.4 L11.6 4.3" fill="none" stroke="#1e2a1e" stroke-width="1.7"/></svg>
<svg style="left:499px;top:525px" width="16" height="16" viewBox="0 0 16 16"><circle cx="8" cy="8" r="6.8" fill="none" stroke="#f2f2f2" stroke-width="1.5"/><path d="M4.4 8 H11.6 M8 4.4 V11.6" stroke="#f2f2f2" stroke-width="1.6"/></svg>
<svg style="left:331.4px;top:549.6px" width="9.2" height="5.6" viewBox="0 0 9.2 5.6"><path d="M0.6 0.8 L4.6 4.7 L8.6 0.8" fill="none" stroke="#d8d8d8" stroke-width="1.6"/></svg>
<div class="t hd" style="left:348px;top:544px;;letter-spacing:-0.58px">SERIAL INTERFACES (6)</div>
<div class="t r" style="left:357px;top:565px;color:#e4e4e4;letter-spacing:-1.10px">CAN</div>
<svg style="left:499px;top:565px" width="16" height="16" viewBox="0 0 16 16"><circle cx="8" cy="8" r="6.8" fill="none" stroke="#f2f2f2" stroke-width="1.5"/><path d="M4.4 8 H11.6 M8 4.4 V11.6" stroke="#f2f2f2" stroke-width="1.6"/></svg>
<div class="t r" style="left:357px;top:585px;color:#e4e4e4;letter-spacing:-0.98px">I2C</div>
<svg style="left:499px;top:585px" width="16" height="16" viewBox="0 0 16 16"><circle cx="8" cy="8" r="6.8" fill="none" stroke="#f2f2f2" stroke-width="1.5"/><path d="M4.4 8 H11.6 M8 4.4 V11.6" stroke="#f2f2f2" stroke-width="1.6"/></svg>
<div class="t r" style="left:357px;top:605px;color:#e4e4e4;letter-spacing:-0.91px">I2S</div>
<svg style="left:499px;top:605px" width="16" height="16" viewBox="0 0 16 16"><circle cx="8" cy="8" r="6.8" fill="none" stroke="#f2f2f2" stroke-width="1.5"/><path d="M4.4 8 H11.6 M8 4.4 V11.6" stroke="#f2f2f2" stroke-width="1.6"/></svg>
<div class="t r" style="left:357px;top:625px;color:#e4e4e4;letter-spacing:-0.70px">ITM</div>
<svg style="left:499px;top:625px" width="16" height="16" viewBox="0 0 16 16"><circle cx="8" cy="8" r="6.8" fill="none" stroke="#f2f2f2" stroke-width="1.5"/><path d="M4.4 8 H11.6 M8 4.4 V11.6" stroke="#f2f2f2" stroke-width="1.6"/></svg>
<div class="t r" style="left:357px;top:645px;color:#e4e4e4;letter-spacing:-1.10px">SPI</div>
<svg style="left:499px;top:645px" width="16" height="16" viewBox="0 0 16 16"><circle cx="8" cy="8" r="6.8" fill="none" stroke="#f2f2f2" stroke-width="1.5"/><path d="M4.4 8 H11.6 M8 4.4 V11.6" stroke="#f2f2f2" stroke-width="1.6"/></svg>
<div class="t r" style="left:357px;top:665px;color:#e4e4e4;letter-spacing:-1.10px">UART2</div>
<div class="t r" style="right:1006px;top:664.8px;color:#b0b0b0;letter-spacing:0">2</div>
<svg style="left:478.1px;top:665.1px" width="15" height="15" viewBox="0 0 15 15"><circle cx="7.5" cy="7.5" r="7.3" fill="#4bb150"/><path d="M3.3 7.7 L6.2 10.4 L11.6 4.3" fill="none" stroke="#1e2a1e" stroke-width="1.7"/></svg>
<svg style="left:499px;top:665px" width="16" height="16" viewBox="0 0 16 16"><circle cx="8" cy="8" r="6.8" fill="none" stroke="#f2f2f2" stroke-width="1.5"/><path d="M4.4 8 H11.6 M8 4.4 V11.6" stroke="#f2f2f2" stroke-width="1.6"/></svg>
<svg style="left:331.4px;top:689.6px" width="9.2" height="5.6" viewBox="0 0 9.2 5.6"><path d="M0.6 0.8 L4.6 4.7 L8.6 0.8" fill="none" stroke="#d8d8d8" stroke-width="1.6"/></svg>
<div class="t hd" style="left:348px;top:684px;;letter-spacing:-0.51px">ANALOG/DIGITAL CONVER...</div>
<div class="t r" style="left:357px;top:705px;color:#e4e4e4;letter-spacing:-1.10px">ADC</div>
<svg style="left:499px;top:705px" width="16" height="16" viewBox="0 0 16 16"><circle cx="8" cy="8" r="6.8" fill="none" stroke="#f2f2f2" stroke-width="1.5"/><path d="M4.4 8 H11.6 M8 4.4 V11.6" stroke="#f2f2f2" stroke-width="1.6"/></svg>
<div class="t r" style="left:357px;top:725px;color:#e4e4e4;letter-spacing:-0.89px">ADCBuf</div>
<svg style="left:499px;top:725px" width="16" height="16" viewBox="0 0 16 16"><circle cx="8" cy="8" r="6.8" fill="none" stroke="#f2f2f2" stroke-width="1.5"/><path d="M4.4 8 H11.6 M8 4.4 V11.6" stroke="#f2f2f2" stroke-width="1.6"/></svg>
<div class="t r" style="left:357px;top:745px;color:#e4e4e4;letter-spacing:-1.10px">DAC</div>
<svg style="left:499px;top:745px" width="16" height="16" viewBox="0 0 16 16"><circle cx="8" cy="8" r="6.8" fill="none" stroke="#f2f2f2" stroke-width="1.5"/><path d="M4.4 8 H11.6 M8 4.4 V11.6" stroke="#f2f2f2" stroke-width="1.6"/></svg>
<svg style="left:331.4px;top:769.6px" width="9.2" height="5.6" viewBox="0 0 9.2 5.6"><path d="M0.6 0.8 L4.6 4.7 L8.6 0.8" fill="none" stroke="#d8d8d8" stroke-width="1.6"/></svg>
<div class="t hd" style="left:348px;top:764px;;letter-spacing:-0.68px">STORAGE INTERFACES (2)</div>
<div class="t r" style="left:357px;top:785px;color:#e4e4e4;letter-spacing:-1.10px">NVS</div>
<div class="t r" style="right:1006px;top:784.8px;color:#b0b0b0;letter-spacing:0">2</div>
<svg style="left:478.1px;top:785.1px" width="15" height="15" viewBox="0 0 15 15"><circle cx="7.5" cy="7.5" r="7.3" fill="#4bb150"/><path d="M3.3 7.7 L6.2 10.4 L11.6 4.3" fill="none" stroke="#1e2a1e" stroke-width="1.7"/></svg>
<svg style="left:499px;top:785px" width="16" height="16" viewBox="0 0 16 16"><circle cx="8" cy="8" r="6.8" fill="none" stroke="#f2f2f2" stroke-width="1.5"/><path d="M4.4 8 H11.6 M8 4.4 V11.6" stroke="#f2f2f2" stroke-width="1.6"/></svg>
<div class="a" style="left:541px;top:13px;width:936px;height:31px;background:#333333;"></div>
<div class="a" style="left:541px;top:43px;width:936px;height:1px;background:#bdbdbd;"></div>
<svg style="left:553px;top:22px" width="12" height="12" viewBox="0 0 12 12"><path d="M11.6 6 H1.2 M6 1 L1 6 L6 11" fill="none" stroke="#dcdcdc" stroke-width="1.5"/></svg>
<svg style="left:576px;top:22px" width="12" height="12" viewBox="0 0 12 12"><path d="M0.4 6 H10.8 M6 1 L11 6 L6 11" fill="none" stroke="#dcdcdc" stroke-width="1.5"/></svg>
<div class="t r" style="left:601px;top:19px;color:#dedede;letter-spacing:-0.23px">Software</div>
<svg style="left:657px;top:24.5px" width="4" height="7" viewBox="0 0 4 7"><path d="M0 0 L4 3.5 L0 7 Z" fill="#bdbdbd"/></svg>
<div class="t r" style="left:668px;top:19px;color:#dedede;letter-spacing:-0.38px">Custom</div>
<div class="t rb" style="left:547px;top:53px;color:#dfe1e6;letter-spacing:-0.52px">Custom</div>
<svg style="left:592px;top:58px" width="10" height="10" viewBox="0 0 10 10"><circle cx="5" cy="5" r="4.3" fill="none" stroke="#f4f4f4" stroke-width="1.15"/><path d="M3.5 4 A1.5 1.5 0 1 1 5 5.4 V6.3" fill="none" stroke="#f4f4f4" stroke-width="1.05"/><rect x="4.45" y="7" width="1.1" height="1.1" fill="#f4f4f4"/></svg>
<div class="a" style="left:920px;top:48px;width:64px;height:27px;background:#3a3a3a;border-radius:3px"></div>
<svg style="left:933.5px;top:53.5px" width="15" height="15" viewBox="0 0 15 15"><circle cx="7.5" cy="7.5" r="6.6" fill="none" stroke="#767676" stroke-width="1.35"/><path d="M4 7.5 H11 M7.5 4 V11" stroke="#767676" stroke-width="1.4"/></svg>
<div class="t b" style="left:951.3px;top:53px;font-size:11.5px;color:#777;letter-spacing:-1.10px">ADD</div>
<div class="a" style="left:990px;top:48px;width:95px;height:27px;background:#0f629c;border-radius:3px;box-shadow:0 1px 3px rgba(0,0,0,.5)"></div>
<svg style="left:994px;top:54px" width="16" height="14" viewBox="0 0 16 14"><path d="M0.4 2.4 H8.4 M3 2.4 V1 H5.8 V2.4" stroke="#fff" stroke-width="1.5" fill="none"/><path d="M1 3.8 H7.8 V12 Q7.8 13.2 6.6 13.2 H2.2 Q1 13.2 1 12 Z" fill="#fff"/><path d="M9.6 4.6 H15.6 M9.6 7.8 H14.4 M9.6 11 H12.6" stroke="#fff" stroke-width="1.5"/></svg>
<div class="t b" style="left:1013px;top:53px;font-size:11.5px;color:#fff;letter-spacing:-0.60px">REMOVE ALL</div>
<div class="t r" style="left:557px;top:85px;;letter-spacing:-0.33px">Proprietary (169 MHz)</div>
<div class="t r" style="left:825px;top:85px;color:#848484;letter-spacing:-0.43px">No Proprietary (169 MHz) PHY selected</div>
<svg style="left:1067.7px;top:89.3px" width="8.6" height="5" viewBox="0 0 8.6 5"><path d="M0 0 H8.6 L4.3 5 Z" fill="#e6e6e6"/></svg>
<div class="a" style="left:825px;top:102px;width:257px;height:1px;background:#c9c9c9;"></div>
<div class="t r" style="left:557px;top:109px;;letter-spacing:-0.38px">Proprietary (420 - 527 MHz)</div>
<div class="t r" style="left:825px;top:109px;color:#848484;letter-spacing:-0.49px">No Proprietary (420 - 527 MHz) PHY sel...</div>
<svg style="left:1067.7px;top:113.8px" width="8.6" height="5" viewBox="0 0 8.6 5"><path d="M0 0 H8.6 L4.3 5 Z" fill="#e6e6e6"/></svg>
<div class="a" style="left:825px;top:126px;width:257px;height:1px;background:#c9c9c9;"></div>
<div class="t r" style="left:557px;top:143px;;letter-spacing:-0.38px">Proprietary (779 - 930 MHz)</div>
<div class="t r" style="left:825px;top:133px;color:#e4e8ee;letter-spacing:-0.50px">Custom PHY Setting, 868 Mhz band</div>
<svg style="left:1067.7px;top:147.8px" width="8.6" height="5" viewBox="0 0 8.6 5"><path d="M0 0 H8.6 L4.3 5 Z" fill="#e6e6e6"/></svg>
<div class="a" style="left:825px;top:168px;width:257px;height:1px;background:#c9c9c9;"></div>
<div class="card" style="left:549px;top:175px;width:539px;height:528px"></div>
<div class="t rb" style="left:562px;top:188px;;letter-spacing:-0.43px">Custom PHY Setting, 868 Mhz band</div>
<svg style="left:1054px;top:189px" width="10" height="6" viewBox="0 0 10 6"><path d="M0.7 5.3 L5 1 L9.3 5.3" fill="none" stroke="#e0e0e0" stroke-width="1.4"/></svg>
<div class="t r" style="left:566px;top:220px;;letter-spacing:-0.60px">Frequency Band</div>
<div class="t r" style="left:826px;top:220px;color:#8a8a8a;letter-spacing:-0.52px">779 - 930 MHz</div>
<svg style="left:1059.7px;top:225.3px" width="8.6" height="5" viewBox="0 0 8.6 5"><path d="M0 0 H8.6 L4.3 5 Z" fill="#6c6c6c"/></svg>
<div class="a" style="left:826px;top:237px;width:249px;height:0;border-top:1px dotted #9a9a9a"></div>
<div class="t r" style="left:566px;top:245px;;letter-spacing:-0.73px">PHY Type</div>
<div class="t r" style="left:826px;top:245px;color:#ececec;letter-spacing:-0.63px">50 kbps, 25 kHz Deviation, 2-GFSK, 10...</div>
<svg style="left:1059.7px;top:249.8px" width="8.6" height="5" viewBox="0 0 8.6 5"><path d="M0 0 H8.6 L4.3 5 Z" fill="#e6e6e6"/></svg>
<div class="a" style="left:826px;top:262px;width:249px;height:1px;background:#c9c9c9;"></div>
<div class="card" style="left:558px;top:269px;width:523px;height:289px"></div>
<div class="t rb" style="left:571px;top:282px;;letter-spacing:-0.35px">PHY Properties</div>
<svg style="left:1047px;top:284px" width="10" height="6" viewBox="0 0 10 6"><path d="M0.7 5.3 L5 1 L9.3 5.3" fill="none" stroke="#e0e0e0" stroke-width="1.4"/></svg>
<div class="t r" style="left:575px;top:313px;;letter-spacing:-0.49px">Frequency (MHz)</div>
<div class="t r" style="left:826px;top:314px;color:#ececec;letter-spacing:-0.47px">868.0000</div>
<div class="a" style="left:826px;top:330px;width:238px;height:1px;background:#c9c9c9;"></div>
<div class="t r" style="left:575px;top:337px;;letter-spacing:-0.53px">Symbol Rate (kBaud)</div>
<div class="t r" style="left:826px;top:338px;color:#ececec;letter-spacing:-0.38px">50.000</div>
<div class="a" style="left:826px;top:354px;width:238px;height:1px;background:#c9c9c9;"></div>
<div class="t r" style="left:575px;top:361.5px;;letter-spacing:-0.38px">Deviation (kHz)</div>
<div class="t r" style="left:826px;top:361.8px;color:#ececec;letter-spacing:-0.33px">25.0</div>
<div class="a" style="left:826px;top:378px;width:238px;height:1px;background:#c9c9c9;"></div>
<div class="t r" style="left:575px;top:386px;;letter-spacing:-0.60px">RX Filter BW (kHz)</div>
<div class="t r" style="left:826px;top:386.3px;color:#ececec;letter-spacing:-0.33px">98.0</div>
<svg style="left:1048.7px;top:391.3px" width="8.6" height="5" viewBox="0 0 8.6 5"><path d="M0 0 H8.6 L4.3 5 Z" fill="#e6e6e6"/></svg>
<div class="a" style="left:826px;top:403px;width:238px;height:1px;background:#c9c9c9;"></div>
<div class="t r" style="left:575px;top:410px;;letter-spacing:-0.51px">TX Power (dBm)</div>
<div class="t r" style="left:826px;top:410.3px;color:#ececec;letter-spacing:-0.48px">10</div>
<svg style="left:1048.7px;top:415.3px" width="8.6" height="5" viewBox="0 0 8.6 5"><path d="M0 0 H8.6 L4.3 5 Z" fill="#e6e6e6"/></svg>
<div class="a" style="left:826px;top:427px;width:238px;height:1px;background:#c9c9c9;"></div>
<div class="t r" style="left:575px;top:435px;;letter-spacing:-0.40px">Whitening</div>
<div class="t r" style="left:826px;top:435.3px;color:#ececec;letter-spacing:-0.35px">No whitening</div>
<svg style="left:1048.7px;top:440.3px" width="8.6" height="5" viewBox="0 0 8.6 5"><path d="M0 0 H8.6 L4.3 5 Z" fill="#e6e6e6"/></svg>
<div class="a" style="left:826px;top:452px;width:238px;height:1px;background:#c9c9c9;"></div>
<div class="t r" style="left:575px;top:460px;;letter-spacing:-0.49px">Preamble Count</div>
<div class="t r" style="left:826px;top:460.3px;color:#ececec;letter-spacing:-0.48px">4 Bytes</div>
<svg style="left:1048.7px;top:465.3px" width="8.6" height="5" viewBox="0 0 8.6 5"><path d="M0 0 H8.6 L4.3 5 Z" fill="#e6e6e6"/></svg>
<div class="a" style="left:826px;top:477px;width:238px;height:1px;background:#c9c9c9;"></div>
<div class="t r" style="left:575px;top:485px;;letter-spacing:-0.49px">Preamble Mode</div>
<div class="t r" style="left:826px;top:485.3px;color:#ececec;letter-spacing:-0.33px">Send 0 as the first preamble bit</div>
<svg style="left:1048.7px;top:490.3px" width="8.6" height="5" viewBox="0 0 8.6 5"><path d="M0 0 H8.6 L4.3 5 Z" fill="#e6e6e6"/></svg>
<div class="a" style="left:826px;top:502px;width:238px;height:1px;background:#c9c9c9;"></div>
<div class="t r" style="left:575px;top:509px;;letter-spacing:-0.55px">Sync Word Length</div>
<div class="t r" style="left:826px;top:509.29999999999995px;color:#ececec;letter-spacing:-0.32px">32 Bits</div>
<svg style="left:1048.7px;top:514.3px" width="8.6" height="5" viewBox="0 0 8.6 5"><path d="M0 0 H8.6 L4.3 5 Z" fill="#e6e6e6"/></svg>
<div class="a" style="left:826px;top:526px;width:238px;height:1px;background:#c9c9c9;"></div>
<div class="t r" style="left:575px;top:534px;;letter-spacing:-0.72px">Sync Word</div>
<div class="t r" style="left:826px;top:535px;color:#ececec;letter-spacing:-0.71px">0x930B51DE</div>
<div class="a" style="left:826px;top:551px;width:240px;height:1px;background:#c9c9c9;"></div>
<svg style="left:803px;top:308px;z-index:50" width="168" height="30.2" viewBox="0 0 168 30.2"><rect x="1.9" y="1.9" width="164.2" height="26.4" rx="6.5" fill="none" stroke="#e9412a" stroke-width="3.8"/></svg>
<div class="card" style="left:558px;top:567px;width:523px;height:36px"></div>
<div class="t rb" style="left:571px;top:580px;;letter-spacing:-0.42px">Link Layer</div>
<svg style="left:1047px;top:582px" width="10" height="6" viewBox="0 0 10 6"><path d="M0.7 0.7 L5 5 L9.3 0.7" fill="none" stroke="#e0e0e0" stroke-width="1.4"/></svg>
<div class="card" style="left:558px;top:612px;width:523px;height:36px"></div>
<div class="t rb" style="left:571px;top:625px;;letter-spacing:-0.37px">Code Export Configuration</div>
<svg style="left:1047px;top:627px" width="10" height="6" viewBox="0 0 10 6"><path d="M0.7 0.7 L5 5 L9.3 0.7" fill="none" stroke="#e0e0e0" stroke-width="1.4"/></svg>
<div class="card" style="left:558px;top:657px;width:523px;height:36px"></div>
<div class="t rb" style="left:571px;top:670px;;letter-spacing:-0.50px">Other Dependencies</div>
<svg style="left:1047px;top:672px" width="10" height="6" viewBox="0 0 10 6"><path d="M0.7 0.7 L5 5 L9.3 0.7" fill="none" stroke="#e0e0e0" stroke-width="1.4"/></svg>
<div class="rc" style="left:1100px;top:52px;width:390px;height:110px;background:#3b3b3b"></div>
<svg style="left:1121px;top:64px" width="18" height="18" viewBox="0 0 18 18"><circle cx="9" cy="9" r="7.9" fill="none" stroke="#f0f0f0" stroke-width="1.5"/><path d="M9 8 V13.2" stroke="#f0f0f0" stroke-width="1.7"/><circle cx="9" cy="5.4" r="1" fill="#f0f0f0"/></svg>
<div class="t r" style="left:1144px;top:64px;color:#dcdcdc;letter-spacing:-0.42px">Problems</div>
<div class="a" style="left:1108px;top:94px;width:90px;height:29px;background:#535353;border-radius:2px"></div>
<div class="a" style="left:1204px;top:94px;width:107px;height:29px;background:#535353;border-radius:2px"></div>
<svg style="left:1113px;top:99.5px" width="15" height="15" viewBox="0 0 15 15"><circle cx="7.5" cy="7.5" r="7" fill="#bdbdbd"/><path d="M4.8 4.8 L10.2 10.2 M10.2 4.8 L4.8 10.2" stroke="#535353" stroke-width="1.4"/></svg>
<div class="t b" style="left:1129.5px;top:99.5px;font-size:11.5px;color:#4a8df8;letter-spacing:-0.42px">ERRORS</div>
<svg style="left:1178px;top:99.5px" width="16" height="16" viewBox="0 0 16 16"><circle cx="8" cy="8" r="7" fill="#434343"/></svg>
<div class="t " style="left:1182.7px;top:99.5px;font-size:12px;color:#d8d8d8">0</div>
<svg style="left:1209px;top:99.5px" width="16" height="14" viewBox="0 0 16 14"><path d="M8 0.3 L15.8 13.6 H0.2 Z" fill="#bdbdbd"/><path d="M8 5 V9.3" stroke="#535353" stroke-width="1.6"/><rect x="7.2" y="10.4" width="1.6" height="1.6" fill="#535353"/></svg>
<div class="t b" style="left:1226px;top:99.5px;font-size:11.5px;color:#4a8df8;letter-spacing:0.03px">WARNINGS</div>
<svg style="left:1292px;top:99.5px" width="16" height="16" viewBox="0 0 16 16"><circle cx="8" cy="8" r="7" fill="#434343"/></svg>
<div class="t " style="left:1296.7px;top:99.5px;font-size:12px;color:#d8d8d8">0</div>
<svg style="left:1322px;top:99.5px" width="16" height="14" viewBox="0 0 16 14"><path d="M8 0.3 L15.8 13.6 H0.2 Z" fill="#bdbdbd"/><path d="M8 5 V9.3" stroke="#3b3b3b" stroke-width="1.6"/><rect x="7.2" y="10.4" width="1.6" height="1.6" fill="#3b3b3b"/></svg>
<div class="t b" style="left:1339.3px;top:99.5px;font-size:11.5px;color:#4a8df8;letter-spacing:-0.16px">SUPPRESSED</div>
<svg style="left:1419px;top:99.5px" width="16" height="16" viewBox="0 0 16 16"><circle cx="8" cy="8" r="7" fill="#6e6e6e"/></svg>
<div class="t " style="left:1423.7px;top:99.5px;font-size:12px;color:#e8e8e8">1</div>
<svg style="left:1449px;top:99.5px" width="16" height="16" viewBox="0 0 16 16"><circle cx="8" cy="8" r="6.6" fill="none" stroke="#cfcfcf" stroke-width="1.3"/><path d="M8 7.2 V11.6" stroke="#cfcfcf" stroke-width="1.5"/><circle cx="8" cy="4.8" r="0.9" fill="#cfcfcf"/></svg>
<div class="t b" style="left:1466px;top:99.5px;font-size:11.5px;letter-spacing:-0.3px;color:#4a8df8">INFO</div>
<div class="a" style="left:1105px;top:126px;width:372px;height:1px;background:#555;"></div>
<div class="t rb" style="left:1120px;top:135px;;letter-spacing:-0.22px">Location</div>
<svg style="left:1175px;top:136px" width="11" height="13" viewBox="0 0 11 13"><path d="M3 8.6 V1 M0.8 3.2 L3 1 L5.2 3.2" fill="none" stroke="#e8e8e8" stroke-width="1.25"/><path d="M8 4 V12 M5.8 9.8 L8 12 L10.2 9.8" fill="none" stroke="#e8e8e8" stroke-width="1.25"/></svg>
<div class="t rb" style="left:1306px;top:135px;;letter-spacing:-0.25px">Details</div>
<div class="a" style="left:1105px;top:156px;width:372px;height:1px;background:#555;"></div>
<div class="rc" style="left:1100px;top:172px;width:390px;height:491px;background:#3b3b3b"></div>
<svg style="left:1121px;top:187px" width="18" height="11" viewBox="0 0 18 11"><path d="M6.2 0.8 L1.4 5.5 L6.2 10.2 M11.8 0.8 L16.6 5.5 L11.8 10.2" fill="none" stroke="#f4f4f4" stroke-width="2.1"/></svg>
<div class="t r" style="left:1144px;top:184px;color:#dcdcdc;letter-spacing:-0.57px">Generated Files</div>
<div class="t r" style="left:1123.5px;top:215px;color:#dcdcdc;letter-spacing:-0.27px">Filter:</div>
<div class="t r" style="left:1160px;top:215px;color:#dcdcdc">all</div>
<div class="a" style="left:1160px;top:232px;width:317px;height:1px;background:#c4c4c4;"></div>
<div class="t rb" style="left:1120px;top:244px;;letter-spacing:-0.45px">File name</div>
<div class="t rb" style="left:1356px;top:244px;;letter-spacing:-0.43px">Category</div>
<div class="a" style="left:1105px;top:265px;width:372px;height:1px;background:#555;"></div>
<svg style="left:1124px;top:271px" width="14" height="17" viewBox="0 0 14 17"><path d="M2.4 0.9 H8.4 L13.1 5.6 V14.6 Q13.1 16.1 11.6 16.1 H2.4 Q0.9 16.1 0.9 14.6 V2.4 Q0.9 0.9 2.4 0.9 Z M8.2 1 V5.8 H13" fill="none" stroke="#d2d2d2" stroke-width="1.6"/></svg>
<div class="t r lk" style="left:1147px;top:273px;color:#4a8df8;letter-spacing:-0.30px">ti_radio_config.c</div>
<div class="t r" style="left:1356px;top:273px;color:#dcdcdc;letter-spacing:-0.71px">RF Stacks</div>
<div class="a" style="left:1105px;top:298px;width:372px;height:1px;background:#555;"></div>
<svg style="left:1124px;top:304px" width="14" height="17" viewBox="0 0 14 17"><path d="M2.4 0.9 H8.4 L13.1 5.6 V14.6 Q13.1 16.1 11.6 16.1 H2.4 Q0.9 16.1 0.9 14.6 V2.4 Q0.9 0.9 2.4 0.9 Z M8.2 1 V5.8 H13" fill="none" stroke="#d2d2d2" stroke-width="1.6"/></svg>
<div class="t r lk" style="left:1147px;top:306px;color:#4a8df8;letter-spacing:-0.33px">ti_radio_config.h</div>
<div class="t r" style="left:1356px;top:306px;color:#dcdcdc;letter-spacing:-0.71px">RF Stacks</div>
<div class="a" style="left:1105px;top:331px;width:372px;height:1px;background:#555;"></div>
<svg style="left:1124px;top:337px" width="14" height="17" viewBox="0 0 14 17"><path d="M2.4 0.9 H8.4 L13.1 5.6 V14.6 Q13.1 16.1 11.6 16.1 H2.4 Q0.9 16.1 0.9 14.6 V2.4 Q0.9 0.9 2.4 0.9 Z M8.2 1 V5.8 H13" fill="none" stroke="#d2d2d2" stroke-width="1.6"/></svg>
<div class="t r lk" style="left:1147px;top:339px;color:#4a8df8;letter-spacing:-0.30px">ti_drivers_config.c</div>
<div class="t r" style="left:1356px;top:339px;color:#dcdcdc;letter-spacing:-0.48px">TI Drivers</div>
<div class="a" style="left:1105px;top:363px;width:372px;height:1px;background:#555;"></div>
<svg style="left:1124px;top:370px" width="14" height="17" viewBox="0 0 14 17"><path d="M2.4 0.9 H8.4 L13.1 5.6 V14.6 Q13.1 16.1 11.6 16.1 H2.4 Q0.9 16.1 0.9 14.6 V2.4 Q0.9 0.9 2.4 0.9 Z M8.2 1 V5.8 H13" fill="none" stroke="#d2d2d2" stroke-width="1.6"/></svg>
<div class="t r lk" style="left:1147px;top:372px;color:#4a8df8;letter-spacing:-0.33px">ti_drivers_config.h</div>
<div class="t r" style="left:1356px;top:372px;color:#dcdcdc;letter-spacing:-0.48px">TI Drivers</div>
<div class="a" style="left:1105px;top:396px;width:372px;height:1px;background:#555;"></div>
<svg style="left:1124px;top:402px" width="14" height="17" viewBox="0 0 14 17"><path d="M2.4 0.9 H8.4 L13.1 5.6 V14.6 Q13.1 16.1 11.6 16.1 H2.4 Q0.9 16.1 0.9 14.6 V2.4 Q0.9 0.9 2.4 0.9 Z M8.2 1 V5.8 H13" fill="none" stroke="#d2d2d2" stroke-width="1.6"/></svg>
<div class="t r lk" style="left:1147px;top:404px;color:#4a8df8;letter-spacing:-0.31px">ti_utils_build_linker.cmd.genlibs</div>
<div class="t r" style="left:1356px;top:404px;color:#dcdcdc;letter-spacing:-0.22px">Build Assist</div>
<div class="a" style="left:1105px;top:429px;width:372px;height:1px;background:#555;"></div>
<svg style="left:1124px;top:435px" width="14" height="17" viewBox="0 0 14 17"><path d="M2.4 0.9 H8.4 L13.1 5.6 V14.6 Q13.1 16.1 11.6 16.1 H2.4 Q0.9 16.1 0.9 14.6 V2.4 Q0.9 0.9 2.4 0.9 Z M8.2 1 V5.8 H13" fill="none" stroke="#d2d2d2" stroke-width="1.6"/></svg>
<div class="t r lk" style="left:1147px;top:437px;color:#4a8df8;letter-spacing:-0.34px">ti_utils_build_linker.cmd.genmap</div>
<div class="t r" style="left:1356px;top:437px;color:#dcdcdc;letter-spacing:-0.22px">Build Assist</div>
<div class="a" style="left:1105px;top:461px;width:372px;height:1px;background:#555;"></div>
<svg style="left:1124px;top:468px" width="14" height="17" viewBox="0 0 14 17"><path d="M2.4 0.9 H8.4 L13.1 5.6 V14.6 Q13.1 16.1 11.6 16.1 H2.4 Q0.9 16.1 0.9 14.6 V2.4 Q0.9 0.9 2.4 0.9 Z M8.2 1 V5.8 H13" fill="none" stroke="#d2d2d2" stroke-width="1.6"/></svg>
<div class="t r lk" style="left:1147px;top:470px;color:#4a8df8;letter-spacing:-0.28px">ti_utils_build_compiler.opt</div>
<div class="t r" style="left:1356px;top:470px;color:#dcdcdc;letter-spacing:-0.22px">Build Assist</div>
<div class="a" style="left:1105px;top:494px;width:372px;height:1px;background:#555;"></div>
<svg style="left:1124px;top:505px" width="14" height="17" viewBox="0 0 14 17"><path d="M2.4 0.9 H8.4 L13.1 5.6 V14.6 Q13.1 16.1 11.6 16.1 H2.4 Q0.9 16.1 0.9 14.6 V2.4 Q0.9 0.9 2.4 0.9 Z M8.2 1 V5.8 H13" fill="none" stroke="#d2d2d2" stroke-width="1.6"/></svg>
<div class="t r lk" style="left:1147px;top:507px;color:#4a8df8;letter-spacing:-0.35px">syscfg_c.rov.xs</div>
<div class="a" style="left:1105px;top:535px;width:372px;height:1px;background:#555;"></div>
<svg style="left:1124px;top:542px" width="14" height="17" viewBox="0 0 14 17"><path d="M2.4 0.9 H8.4 L13.1 5.6 V14.6 Q13.1 16.1 11.6 16.1 H2.4 Q0.9 16.1 0.9 14.6 V2.4 Q0.9 0.9 2.4 0.9 Z M8.2 1 V5.8 H13" fill="none" stroke="#d2d2d2" stroke-width="1.6"/></svg>
<div class="t r lk" style="left:1147px;top:544px;color:#4a8df8;letter-spacing:-0.31px">ti_sysbios_config.h</div>
<div class="t r" style="left:1356px;top:544px;color:#dcdcdc;letter-spacing:-1.10px">TI RTOS</div>
<div class="a" style="left:1105px;top:568px;width:372px;height:1px;background:#555;"></div>
<svg style="left:1124px;top:574px" width="14" height="17" viewBox="0 0 14 17"><path d="M2.4 0.9 H8.4 L13.1 5.6 V14.6 Q13.1 16.1 11.6 16.1 H2.4 Q0.9 16.1 0.9 14.6 V2.4 Q0.9 0.9 2.4 0.9 Z M8.2 1 V5.8 H13" fill="none" stroke="#d2d2d2" stroke-width="1.6"/></svg>
<div class="t r lk" style="left:1147px;top:576px;color:#4a8df8;letter-spacing:-0.29px">ti_sysbios_config.c</div>
<div class="t r" style="left:1356px;top:576px;color:#dcdcdc;letter-spacing:-1.10px">TI RTOS</div>
<div class="a" style="left:1105px;top:601px;width:372px;height:1px;background:#555;"></div>
<svg style="left:1124px;top:607px" width="14" height="17" viewBox="0 0 14 17"><path d="M2.4 0.9 H8.4 L13.1 5.6 V14.6 Q13.1 16.1 11.6 16.1 H2.4 Q0.9 16.1 0.9 14.6 V2.4 Q0.9 0.9 2.4 0.9 Z M8.2 1 V5.8 H13" fill="none" stroke="#d2d2d2" stroke-width="1.6"/></svg>
<div class="t r lk" style="left:1147px;top:609px;color:#4a8df8;letter-spacing:-0.36px">rfOADClientIntFlash.syscfg</div>
<div class="t r" style="left:1356px;top:609px;color:#dcdcdc;letter-spacing:-0.28px">Configuration Script</div>
<div class="t r" style="left:1356px;top:498px;color:#dcdcdc;letter-spacing:-0.67px">TI Utils ROV</div>
<div class="t r" style="left:1356px;top:515px;color:#dcdcdc;letter-spacing:-0.17px">manifest</div>
<div class="a" style="left:1105px;top:634px;width:372px;height:1px;background:#555;"></div>
<div class="t r" style="left:1120.5px;top:638px;color:#dcdcdc;letter-spacing:-0.22px">11 Total Files</div>
<div class="a" style="left:1105px;top:658px;width:372px;height:1px;background:#555;"></div>
<div class="rc" style="left:1100px;top:673px;width:390px;height:131px;background:#3b3b3b"></div>
<svg style="left:1120.8px;top:685.7px" width="18.6" height="16.6" viewBox="0 0 18.6 16.6"><rect x="0.9" y="0.9" width="14.8" height="14.8" rx="1.8" fill="none" stroke="#f4f4f4" stroke-width="1.7"/><path d="M16 4.6 H18.6 M16 8.3 H18.6 M16 12 H18.6" stroke="#f4f4f4" stroke-width="1.5"/><rect x="3.3" y="3.1" width="5.3" height="4.7" fill="#f4f4f4"/><rect x="3.3" y="9" width="5.3" height="4.5" fill="#f4f4f4"/><rect x="9.7" y="3.1" width="4" height="7.1" fill="#f4f4f4"/><rect x="9.7" y="11.3" width="4" height="2.2" fill="#f4f4f4"/></svg>
<div class="t r" style="left:1144px;top:686px;color:#e4e4e4;letter-spacing:-0.54px">CC1312R1 LaunchPad (emulating CC1312R device)</div>
<div class="a" style="left:1120px;top:712px;width:120px;height:28px;border:1px solid #3873cf;border-radius:2px"></div>
<div class="t b" style="left:1123px;top:717px;font-size:11.5px;color:#4a8df8;letter-spacing:-0.58px">USE CUSTOM BOARD</div>
<div class="a" style="left:1246px;top:712px;width:64px;height:28px;border:1px solid #3873cf;border-radius:2px"></div>
<div class="t b" style="left:1256.6px;top:717px;font-size:11.5px;color:#4a8df8;letter-spacing:-0.46px">SWITCH</div>
<div class="t " style="left:1147.8px;top:750px;font-size:10.5px;color:#bdbdbd;letter-spacing:-1.10px">1</div>
<div class="t " style="left:1166.7px;top:750px;font-size:10.5px;color:#bdbdbd;letter-spacing:-1.10px">21</div>
<div class="t " style="left:1276px;top:750px;font-size:10.5px;color:#bdbdbd;letter-spacing:-0.89px">40</div>
<div class="t " style="left:1297.9px;top:750px;font-size:10.5px;color:#bdbdbd;letter-spacing:-0.84px">20</div>
<div class="t " style="left:1116.7px;top:770px;font-size:10.5px;color:#bdbdbd;letter-spacing:-1.03px">3V3</div>
<div class="t " style="left:1189px;top:770px;font-size:10.5px;color:#bdbdbd;letter-spacing:-1.10px">5V</div>
<div class="t " style="left:1243.9px;top:770px;font-size:10.5px;color:#bdbdbd;letter-spacing:-1.10px">DIO7</div>
<div class="t " style="left:1319.8px;top:770px;font-size:10.5px;color:#bdbdbd;letter-spacing:-1.10px">GND</div>
<div class="a" style="left:1139px;top:768px;width:45px;height:30px;background:#8f8f8f;border:1px solid #a8a8a8;border-radius:3px 3px 0 0;box-shadow:2px 0 0 #5a5a5a"></div>
<div class="a" style="left:1271px;top:768px;width:45px;height:30px;background:#8f8f8f;border:1px solid #a8a8a8;border-radius:3px 3px 0 0;box-shadow:2px 0 0 #5a5a5a"></div>
<svg style="left:1143.5px;top:772.5px" width="15" height="15" viewBox="0 0 15 15"><circle cx="7.5" cy="7.5" r="7.4" fill="#c4c4c4"/></svg>
<svg style="left:1163.5px;top:772.5px" width="15" height="15" viewBox="0 0 15 15"><circle cx="7.5" cy="7.5" r="7.4" fill="#c4c4c4"/></svg>
<svg style="left:1294.5px;top:772.5px" width="15" height="15" viewBox="0 0 15 15"><circle cx="7.5" cy="7.5" r="7.4" fill="#c4c4c4"/></svg>
<svg style="left:1274.5px;top:772.5px" width="15" height="15" viewBox="0 0 15 15"><circle cx="7.5" cy="7.5" r="7.4" fill="#43b14a"/><circle cx="7.5" cy="7.5" r="1.9" fill="#d4ead5"/></svg>
</body></html>
